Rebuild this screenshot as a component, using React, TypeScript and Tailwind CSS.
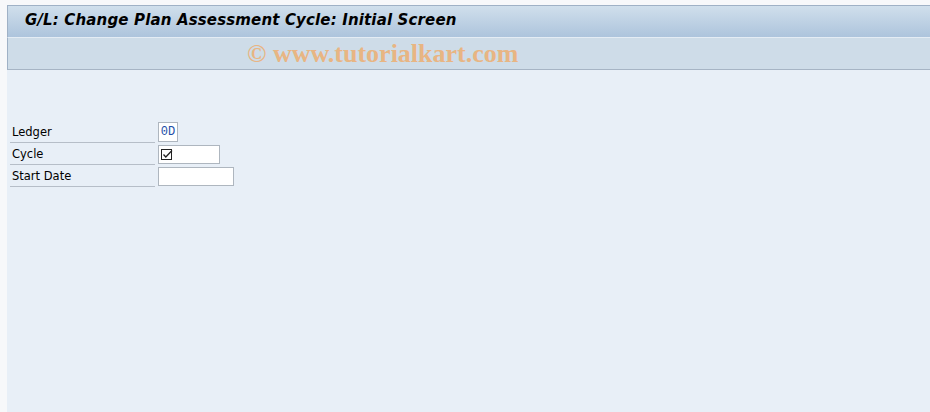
import React from "react";

export default function App() {
  const font = { fontFamily: "Tahoma, 'DejaVu Sans', 'Liberation Sans', sans-serif" };
  return (
    <div className="w-[930px] h-[412px] bg-[#f7f8fa] flex overflow-hidden" style={font}>
      <div className="w-[7px] shrink-0" />
      <div className="flex-1 flex flex-col pt-[5px]">
        <div className="h-[32px] border-t border-l border-[#9fb1c6] bg-gradient-to-b from-[#d0dfec] to-[#adc4dc] flex items-center pl-[17px] pb-[2px] shrink-0">
          <span className="text-[15px] font-bold italic text-black tracking-[0.15px]">
            G/L: Change Plan Assessment Cycle: Initial Screen
          </span>
        </div>
        <div className="h-[33px] border-t border-[#e4ecf4] border-l border-l-[#9fb1c6] border-b border-b-[#a6b4c4] bg-[#cedce8] flex items-center pl-[239px] shrink-0">
          <span
            className="text-[26px] font-bold text-[#e8b583] leading-none"
            style={{ fontFamily: "'Liberation Serif', 'DejaVu Serif', serif" }}
          >
            © www.tutorialkart.com
          </span>
        </div>
        <div className="flex-1 bg-[#e8eff7] pt-[51px] pl-[3px]">
          <div className="flex flex-col w-[230px] text-[11.5px] text-black">
            <div className="flex items-end h-[22px]">
              <div className="w-[145px] h-[21px] border-b border-[#b6bec8] flex items-end pl-[2px] pb-[1px]">Ledger</div>
              <div className="ml-[3px] w-[20px] h-[20px] border border-[#aeb6bf] bg-white flex items-center justify-center text-[12px] text-[#1d4fa8] mb-[1px]" style={{ fontFamily: "'Liberation Mono', monospace" }}>
                0D
              </div>
            </div>
            <div className="flex items-end h-[22px]">
              <div className="w-[145px] h-[22px] border-b border-[#b6bec8] flex items-end pl-[2px] pb-[1px]">Cycle</div>
              <div className="ml-[3px] w-[62px] h-[19px] border border-[#aeb6bf] bg-white flex items-center pl-[2px] mb-[1px]">
                <svg width="12" height="11" viewBox="0 0 12 11">
                  <rect x="0.5" y="0.5" width="10" height="10" fill="none" stroke="#222" strokeWidth="1" />
                  <path d="M2.5 5.5 L4.8 8 L11 1.5" fill="none" stroke="#222" strokeWidth="1.3" />
                </svg>
              </div>
            </div>
            <div className="flex items-end h-[22px]">
              <div className="w-[145px] h-[22px] border-b border-[#b6bec8] flex items-end pl-[2px] pb-[1px]">Start Date</div>
              <div className="ml-[3px] w-[76px] h-[19px] border border-[#aeb6bf] bg-white mb-[1px]" />
            </div>
          </div>
        </div>
      </div>
    </div>
  );
}
